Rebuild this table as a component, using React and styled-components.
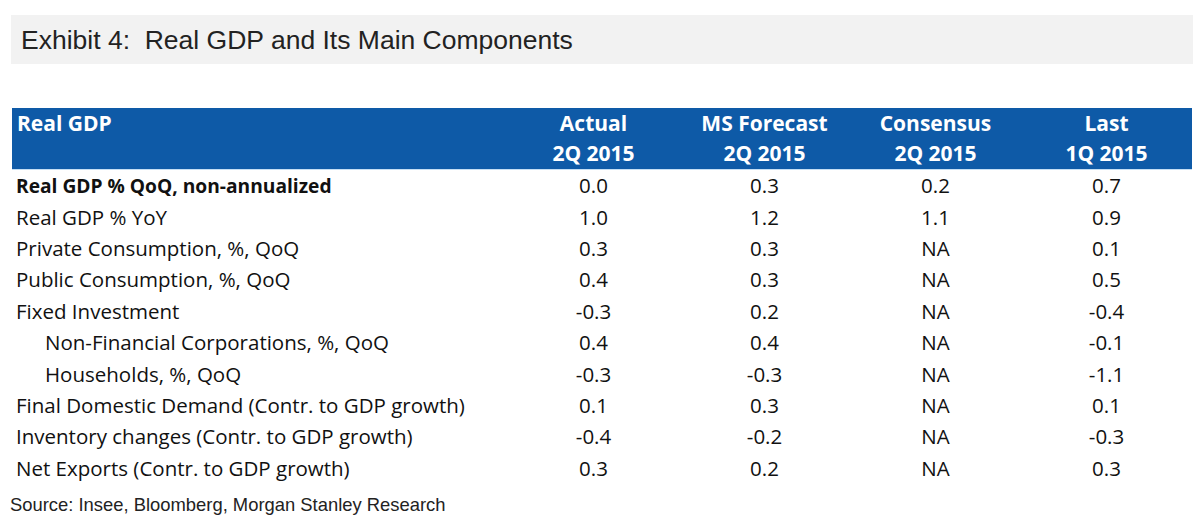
import React from 'react';
import styled, { createGlobalStyle } from 'styled-components';

const GlobalStyle = createGlobalStyle`
  html, body {
    margin: 0;
    padding: 0;
    background: #fff;
  }
`;

const rows = [
  { label: 'Real GDP % QoQ, non-annualized', bold: true, values: ['0.0', '0.3', '0.2', '0.7'] },
  { label: 'Real GDP % YoY', values: ['1.0', '1.2', '1.1', '0.9'] },
  { label: 'Private Consumption, %, QoQ', values: ['0.3', '0.3', 'NA', '0.1'] },
  { label: 'Public Consumption, %, QoQ', values: ['0.4', '0.3', 'NA', '0.5'] },
  { label: 'Fixed Investment', values: ['-0.3', '0.2', 'NA', '-0.4'] },
  { label: 'Non-Financial Corporations, %, QoQ', indent: true, values: ['0.4', '0.4', 'NA', '-0.1'] },
  { label: 'Households, %, QoQ', indent: true, values: ['-0.3', '-0.3', 'NA', '-1.1'] },
  { label: 'Final Domestic Demand (Contr. to GDP growth)', values: ['0.1', '0.3', 'NA', '0.1'] },
  { label: 'Inventory changes (Contr. to GDP growth)', values: ['-0.4', '-0.2', 'NA', '-0.3'] },
  { label: 'Net Exports (Contr. to GDP growth)', values: ['0.3', '0.2', 'NA', '0.3'] }
];

const columns = [
  ['Actual', '2Q 2015'],
  ['MS Forecast', '2Q 2015'],
  ['Consensus', '2Q 2015'],
  ['Last', '1Q 2015']
];

const App = () => (
  <Page>
    <GlobalStyle />
    <TitleBar>Exhibit 4:&nbsp; Real GDP and Its Main Components</TitleBar>
    <Table>
      <colgroup>
        <Col $w={496} />
        {columns.map(([top]) => <Col key={top} $w={171} />)}
      </colgroup>
      <thead>
        <tr>
          <HeadCell $align='left'>Real GDP</HeadCell>
          {columns.map(([top, bottom]) => (
            <HeadCell key={top}>
              {top}
              <br />
              {bottom}
            </HeadCell>
          ))}
        </tr>
      </thead>
      <tbody>
        {rows.map(row => (
          <tr key={row.label}>
            <LabelCell $bold={row.bold} $indent={row.indent}>{row.label}</LabelCell>
            {row.values.map((v, i) => (
              <ValueCell key={i}>{v}</ValueCell>
            ))}
          </tr>
        ))}
      </tbody>
    </Table>
    <Source>Source: Insee, Bloomberg, Morgan Stanley Research</Source>
  </Page>
);

const Page = styled.div`
  width: 1200px;
  height: 531px;
  padding-top: 15px;
  box-sizing: border-box;
  overflow: hidden;
`;

const TitleBar = styled.div`
  margin: 0 7px 0 11px;
  height: 49px;
  background: #f2f2f2;
  padding-left: 10px;
  font-family: "Liberation Sans", Arial, sans-serif;
  font-size: 26.5px;
  line-height: 50px;
  color: #222;
`;

const Table = styled.table`
  margin: 44px 0 0 12px;
  width: 1180px;
  border-collapse: collapse;
  table-layout: fixed;
  font-family: "Open Sans", "Noto Sans", sans-serif;
  font-size: 20.5px;
  color: #111;
`;

const Col = styled.col`
  width: ${p => p.$w}px;
`;

const HeadCell = styled.th`
  background: #0e5aa7;
  color: #fff;
  font-size: 21px;
  font-weight: 700;
  text-align: ${p => p.$align || 'center'};
  vertical-align: top;
  padding: 0 0 0 ${p => (p.$align === 'left' ? '5px' : '0')};
  height: 61px;
  line-height: 30px;
  border-bottom: 1px solid #c4def4;
`;

const LabelCell = styled.td`
  font-weight: ${p => (p.$bold ? 700 : 400)};
  font-size: ${p => (p.$bold ? '19.2px' : 'inherit')};
  padding: 0 0 0 ${p => (p.$indent ? '33px' : '4px')};
  height: 31.4px;
  line-height: 31px;
  white-space: nowrap;
`;

const ValueCell = styled.td`
  text-align: center;
  padding: 0;
  line-height: 31px;
`;

const Source = styled.div`
  margin: 10px 0 0 10px;
  font-family: "Liberation Sans", Arial, sans-serif;
  font-size: 18.4px;
  color: #222;
`;

export default App;
